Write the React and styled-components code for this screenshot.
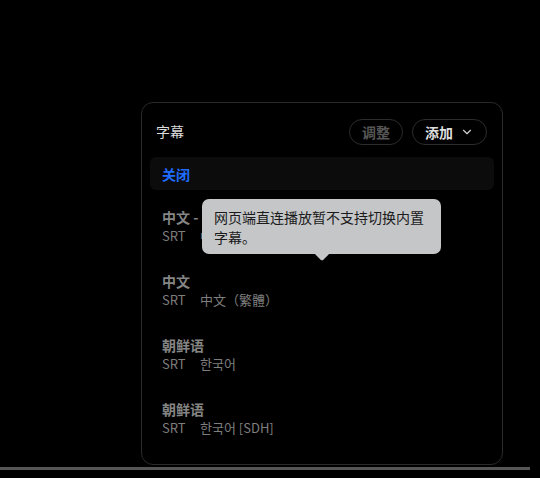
import styled, { createGlobalStyle } from "styled-components";
import { ChevronDown } from "lucide-react";

const GlobalStyle = createGlobalStyle`
    html, body {
        margin: 0;
        background: #000;
        font-family: "Noto Sans CJK SC", "Noto Sans", sans-serif;
    }
`

const tracks = [
    { name: "中文 - 简体", format: "SRT", label: "中文（简体）" },
    { name: "中文", format: "SRT", label: "中文（繁體）" },
    { name: "朝鲜语", format: "SRT", label: "한국어" },
    { name: "朝鲜语", format: "SRT", label: "한국어 [SDH]" },
];

const App = () => {
    return (
        <Page>
            <GlobalStyle />
            <Panel>
                <Header>
                    <Title>字幕</Title>
                    <Actions>
                        <PillButton disabled>调整</PillButton>
                        <PillButton>
                            添加
                            <ChevronDown size={14} strokeWidth={2} />
                        </PillButton>
                    </Actions>
                </Header>

                <OffRow>关闭</OffRow>

                <TrackList>
                    {tracks.map((track, i) => (
                        <Track key={i}>
                            <TrackName>{track.name}</TrackName>
                            <TrackMeta>
                                <Format>{track.format}</Format>
                                {track.label}
                            </TrackMeta>
                        </Track>
                    ))}
                </TrackList>

                <Tooltip>网页端直连播放暂不支持切换内置字幕。</Tooltip>
            </Panel>
            <Progress />
        </Page>
    )
};

const Page = styled.div`
    display: flex;
    flex-direction: column;
    height: 478px;
    padding-top: 102px;
    box-sizing: border-box;
`

const Panel = styled.div`
    position: relative;
    width: 362px;
    height: 363px;
    margin-left: 141px;
    box-sizing: border-box;
    padding: 16px 8px;
    border: 1px solid #2a2a2a;
    border-radius: 12px;
    background: #000;
    display: flex;
    flex-direction: column;
`

const Header = styled.div`
    display: flex;
    align-items: center;
    justify-content: space-between;
    height: 26px;
    padding: 0 7px 0 6px;
`

const Title = styled.span`
    font-size: 14px;
    line-height: 18px;
    margin-top: -3px;
    color: #dcdcdc;
`

const Actions = styled.div`
    display: flex;
    gap: 9px;
`

const PillButton = styled.button`
    display: inline-flex;
    align-items: center;
    gap: 7px;
    height: 26px;
    padding: 0 12px 0 12px;
    border: 1px solid #2c2c2c;
    border-radius: 13px;
    background: transparent;
    font-family: inherit;
    font-size: 14px;
    font-weight: 700;
    color: #dedede;

    &:disabled {
        color: #565656;
    }

    svg {
        color: #cfcfcf;
    }
`

const OffRow = styled.div`
    margin-top: 12px;
    height: 33px;
    display: flex;
    align-items: center;
    padding-left: 12px;
    border-radius: 6px;
    background: #0c0c0c;
    font-size: 14px;
    font-weight: 700;
    color: #1f6cff;
`

const TrackList = styled.div`
    display: flex;
    flex-direction: column;
`

const Track = styled.div`
    height: 64px;
    box-sizing: border-box;
    padding: 18px 12px 0;
    display: flex;
    flex-direction: column;
`

const TrackName = styled.span`
    font-size: 14px;
    line-height: 18px;
    font-weight: 700;
    color: #858585;
`

const TrackMeta = styled.span`
    font-size: 13px;
    line-height: 18px;
    margin-top: 1px;
    color: #7e7e7e;
`

const Format = styled.span`
    display: inline-block;
    width: 38px;
`

const Tooltip = styled.div`
    position: absolute;
    left: 60px;
    top: 96px;
    width: 239px;
    box-sizing: border-box;
    padding: 8px 12px 7px;
    border-radius: 7px;
    background: #c5c6c8;
    font-size: 14px;
    line-height: 20px;
    color: #1b1b1b;

    /* small pointer under the bubble */
    &::after {
        content: "";
        position: absolute;
        left: 50%;
        bottom: -5px;
        width: 10px;
        height: 10px;
        margin-left: -5px;
        background: #c5c6c8;
        border-bottom-right-radius: 2px;
        transform: rotate(45deg);
    }
`

const Progress = styled.div`
    width: 530px;
    height: 3px;
    margin-top: 2px;
    background: #565656;
`

export default App;
